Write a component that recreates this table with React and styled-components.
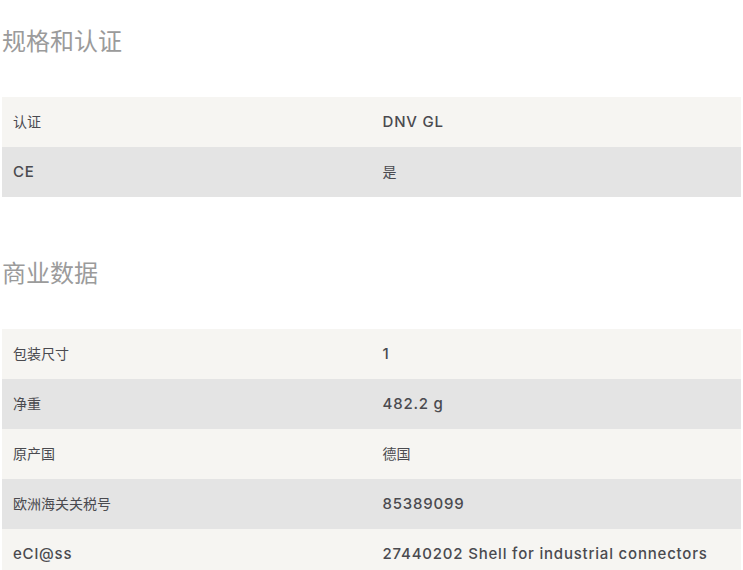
import React from 'react';
import styled, { createGlobalStyle } from 'styled-components';

const GlobalStyle = createGlobalStyle`
  body {
    margin: 0;
    background: #fff;
    font-family: Inter, "Noto Sans CJK SC", sans-serif;
  }
`;

const Page = styled.div`
  padding: 25px 2px 0 2px;
`;

const Section = styled.section`
  & + & {
    margin-top: 60px;
  }
`;

const Title = styled.h2`
  margin: 0 0 42px 0;
  height: 30px;
  line-height: 30px;
  font-family: "Noto Sans CJK SC", sans-serif;
  font-size: 24px;
  font-weight: 400;
  color: #9b9b9b;
`;

const Table = styled.div`
  width: 739px;
`;

const Row = styled.div`
  display: grid;
  grid-template-columns: 1fr 1fr;
  height: 50px;
  align-items: center;
  background: ${props => (props.$shade ? '#e4e4e4' : '#f6f5f2')};
`;

const Cell = styled.div`
  padding: 0 11px;
  height: 22px;
  line-height: 22px;
  color: #4a4a4f;
  font-size: ${props => (props.$cjk ? '14px' : '15px')};
  font-weight: ${props => (props.$cjk ? 400 : 500)};
  letter-spacing: ${props => (props.$cjk ? '0' : '0.8px')};
`;

const isCjk = text => /[\u4e00-\u9fff]/.test(text);

const specs = [
  ['认证', 'DNV GL'],
  ['CE', '是'],
];

const trade = [
  ['包装尺寸', '1'],
  ['净重', '482.2 g'],
  ['原产国', '德国'],
  ['欧洲海关关税号', '85389099'],
  ['eCl@ss', '27440202 Shell for industrial connectors'],
];

const DataTable = ({ rows }) => (
  <Table>
    {rows.map(([label, value], i) => (
      <Row key={label} $shade={i % 2 === 1}>
        <Cell $cjk={isCjk(label)}>{label}</Cell>
        <Cell $cjk={isCjk(value)}>{value}</Cell>
      </Row>
    ))}
  </Table>
);

const App = () => {
  return (
    <Page>
      <GlobalStyle />
      <Section>
        <Title>规格和认证</Title>
        <DataTable rows={specs} />
      </Section>
      <Section>
        <Title>商业数据</Title>
        <DataTable rows={trade} />
      </Section>
    </Page>
  );
};

export default App;
